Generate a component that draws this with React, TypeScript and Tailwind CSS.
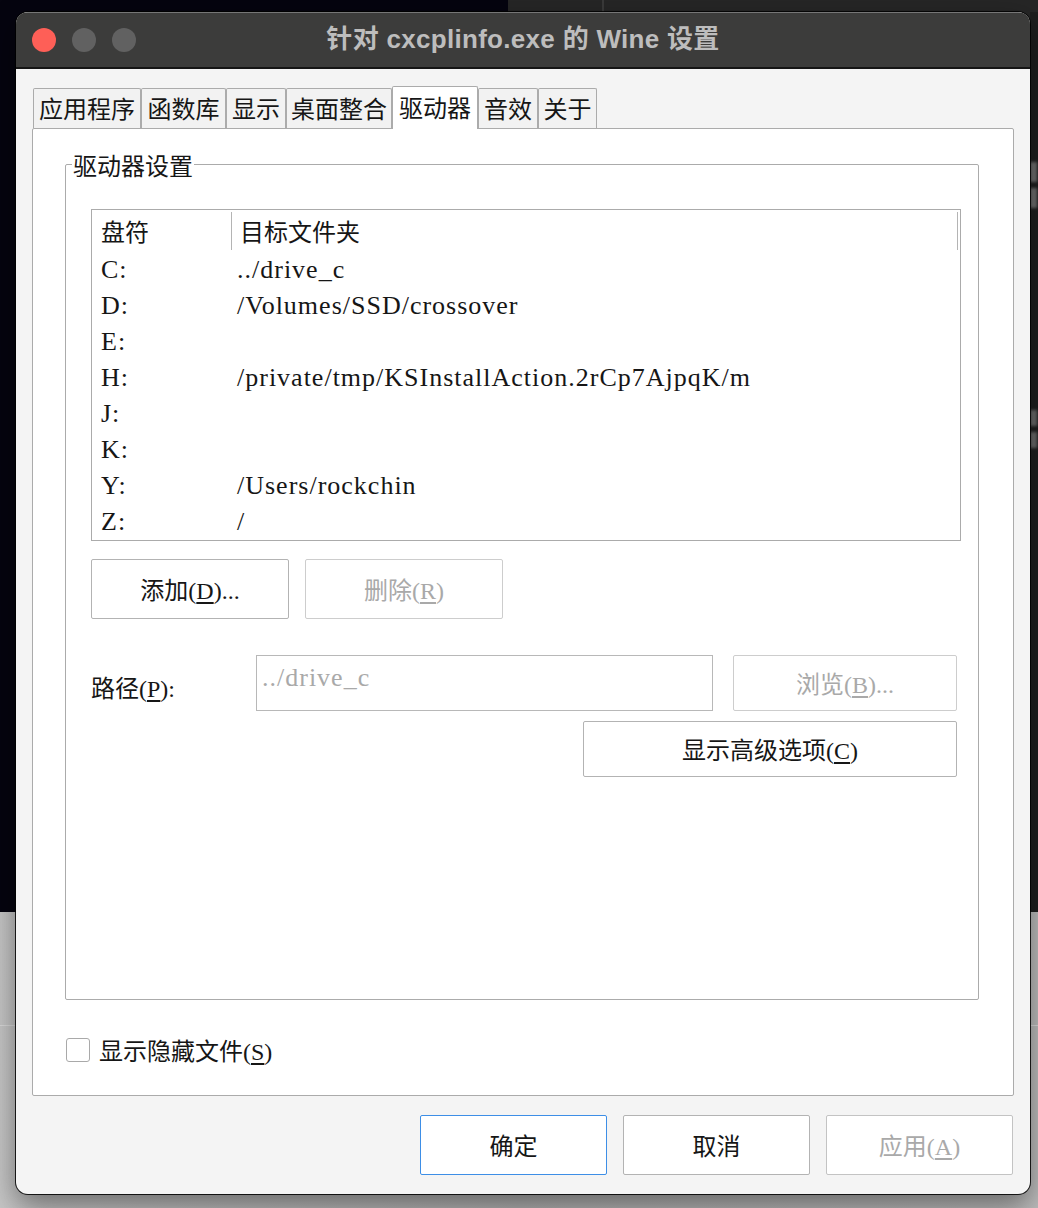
import React from 'react';

const ui = "font-['Liberation_Serif','Noto_Sans_CJK_SC',serif] text-[24px] text-[#161616]";
const latin = 'text-[26px] tracking-[1px]';

const tabs = [
  { label: '应用程序', w: 'w-[108px]' },
  { label: '函数库', w: 'w-[85px]' },
  { label: '显示', w: 'w-[60px]' },
  { label: '桌面整合', w: 'w-[106px]' },
  { label: '驱动器', w: 'w-[86px]', active: true },
  { label: '音效', w: 'w-[60px]' },
  { label: '关于', w: 'w-[59px]' },
];

const drives = [
  { letter: 'C:', path: '../drive_c' },
  { letter: 'D:', path: '/Volumes/SSD/crossover' },
  { letter: 'E:', path: '' },
  { letter: 'H:', path: '/private/tmp/KSInstallAction.2rCp7AjpqK/m' },
  { letter: 'J:', path: '' },
  { letter: 'K:', path: '' },
  { letter: 'Y:', path: '/Users/rockchin' },
  { letter: 'Z:', path: '/' },
];

function Button({
  children,
  disabled,
  className,
}: {
  children: React.ReactNode;
  disabled?: boolean;
  className: string;
}) {
  return (
    <div
      className={`flex items-center justify-center rounded-[2px] border bg-white leading-none pt-[4px] ${
        disabled ? 'text-[#a9a9a9]' : 'text-[#161616]'
      } ${className}`}
    >
      {children}
    </div>
  );
}

export default function App() {
  return (
    <div className={`relative w-[1038px] h-[1208px] overflow-hidden ${ui}`}>
      {/* desktop behind the window */}
      <div className="flex h-[912px]">
        <div className="w-[508px] bg-[#05040f]" />
        <div className="flex-1 bg-[#262626] flex flex-col">
          <div className="h-[12px] flex">
            <div className="w-[94px]" />
            <div className="w-[2px] bg-[#3a3a3a]" />
          </div>
          <div className="flex-1 flex justify-end">
            <div className="w-[8px] bg-[#1e1e1e] flex flex-col gap-[6px] pt-[150px]">
              <div className="h-[20px] w-[7px] bg-[#6f6f6f] blur-[1.5px]" />
              <div className="h-[20px] w-[7px] bg-[#6f6f6f] blur-[1.5px]" />
              <div className="h-[190px]" />
              <div className="h-[16px] w-[7px] bg-[#6a6a6a] blur-[1.5px]" />
              <div className="h-[16px] w-[7px] bg-[#6a6a6a] blur-[1.5px]" />
            </div>
          </div>
        </div>
      </div>
      <div className="h-[296px] bg-gradient-to-r from-[#c6c6c6] via-[#b4b4b4] to-[#bdbdbd] flex flex-col">
        <div className="h-[113px]" />
        <div className="h-[1px] bg-[#d9d9d9]" />
      </div>

      {/* Wine configuration window */}
      <div className="absolute left-[16px] top-[12px] w-[1014px] h-[1182px] rounded-[12px] overflow-hidden flex flex-col bg-[#f4f4f4] shadow-[0_0_0_1px_rgba(0,0,0,0.85),0_12px_30px_rgba(0,0,0,0.45)]">
        {/* title bar */}
        <div className="relative h-[57px] shrink-0 bg-[#3c3c3b] border-b-2 border-[#151515] shadow-[inset_0_1px_0_rgba(255,255,255,0.3)] flex items-center">
          <div className="flex gap-[16px] pl-[16px]">
            <span className="w-[24px] h-[24px] rounded-full bg-[#fe5f57]" />
            <span className="w-[24px] h-[24px] rounded-full bg-[#616161]" />
            <span className="w-[24px] h-[24px] rounded-full bg-[#616161]" />
          </div>
          <div className="absolute inset-0 flex items-center justify-center font-['Liberation_Sans','Noto_Sans_CJK_SC',sans-serif] text-[26px] font-bold text-[#bdbdbd] tracking-[0.3px]">
            针对 cxcplinfo.exe 的 Wine 设置
          </div>
        </div>

        {/* body */}
        <div className="flex-1 flex flex-col px-[16px] pt-[17px]">
          {/* tabs */}
          <div className="relative z-10 flex items-end h-[43px] -mb-px pl-[1px]">
            {tabs.map((t) => (
              <div
                key={t.label}
                className={`${t.w} flex items-center justify-center border border-b-0 border-[#ababab] rounded-t-[2px] leading-none pt-[2px] ${
                  t.active ? 'h-[43px] bg-white' : 'h-[40px] bg-[#f2f2f2] mb-px'
                }`}
              >
                {t.label}
              </div>
            ))}
          </div>

          {/* tab panel */}
          <div className="h-[968px] shrink-0 border border-[#ababab] rounded-[2px] bg-white flex flex-col pl-[32px] pr-[34px] pt-[35px]">
            {/* 驱动器设置 group */}
            <div className="relative h-[836px] border border-[#ababab] rounded-[2px] flex flex-col pl-[25px] pr-[17px] pt-[44px]">
              <span className="absolute -top-[10px] left-[6px] bg-white px-[1px] leading-[24px]">驱动器设置</span>

              {/* drive list */}
              <div className="h-[332px] border border-[#ababab] flex flex-col">
                <div className="h-[42px] flex items-center shrink-0">
                  <div className="w-[140px] h-[38px] flex items-center pl-[9px] pt-[3px] border-r border-[#b4b4b4]">盘符</div>
                  <div className="flex-1 h-[38px] flex items-center pl-[8px] pt-[3px] border-r border-[#b4b4b4] mr-[2px]">目标文件夹</div>
                </div>
                {drives.map((d) => (
                  <div key={d.letter} className={`h-[36px] flex items-center leading-none ${latin}`}>
                    <div className="w-[145px] pl-[9px]">{d.letter}</div>
                    <div>{d.path}</div>
                  </div>
                ))}
              </div>

              {/* add / remove */}
              <div className="flex gap-[16px] mt-[18px]">
                <Button className="w-[198px] h-[60px] border-[#b3b3b3]">
                  添加(<u className="underline-offset-[3px]">D</u>)...
                </Button>
                <Button disabled className="w-[198px] h-[60px] border-[#cdcdcd]">
                  删除(<u className="underline-offset-[3px]">R</u>)
                </Button>
              </div>

              {/* path row */}
              <div className="flex items-center mt-[36px] h-[56px]">
                <div className="w-[165px] pt-[12px] leading-none">
                  路径(<u className="underline-offset-[3px]">P</u>):
                </div>
                <div className={`w-[457px] h-[56px] border border-[#b8b8b8] px-[5px] pt-[8px] leading-[28px] text-[#a9a9a9] ${latin}`}>
                  ../drive_c
                </div>
                <Button disabled className="ml-[20px] w-[224px] h-[56px] border-[#cdcdcd]">
                  浏览(<u className="underline-offset-[3px]">B</u>)...
                </Button>
              </div>
              <div className="flex mt-[10px] pl-[492px]">
                <Button className="w-[374px] h-[56px] border-[#b3b3b3]">
                  显示高级选项(<u className="underline-offset-[3px]">C</u>)
                </Button>
              </div>
            </div>

            {/* hidden files checkbox */}
            <div className="flex items-center gap-[9px] mt-[36px] pl-[1px] leading-none">
              <span className="w-[24px] h-[24px] rounded-[3px] border border-[#a9a9a9] bg-white shrink-0" />
              <span className="pt-[4px]">
                显示隐藏文件(<u className="underline-offset-[3px]">S</u>)
              </span>
            </div>
          </div>

          {/* dialog buttons */}
          <div className="flex justify-end gap-[16px] mt-[19px] pr-[1px]">
            <Button className="w-[187px] h-[60px] border-[#3d8ee6]">确定</Button>
            <Button className="w-[187px] h-[60px] border-[#b3b3b3]">取消</Button>
            <Button disabled className="w-[187px] h-[60px] border-[#c3c3c3]">
              应用(<u className="underline-offset-[3px]">A</u>)
            </Button>
          </div>
        </div>
      </div>
    </div>
  );
}
